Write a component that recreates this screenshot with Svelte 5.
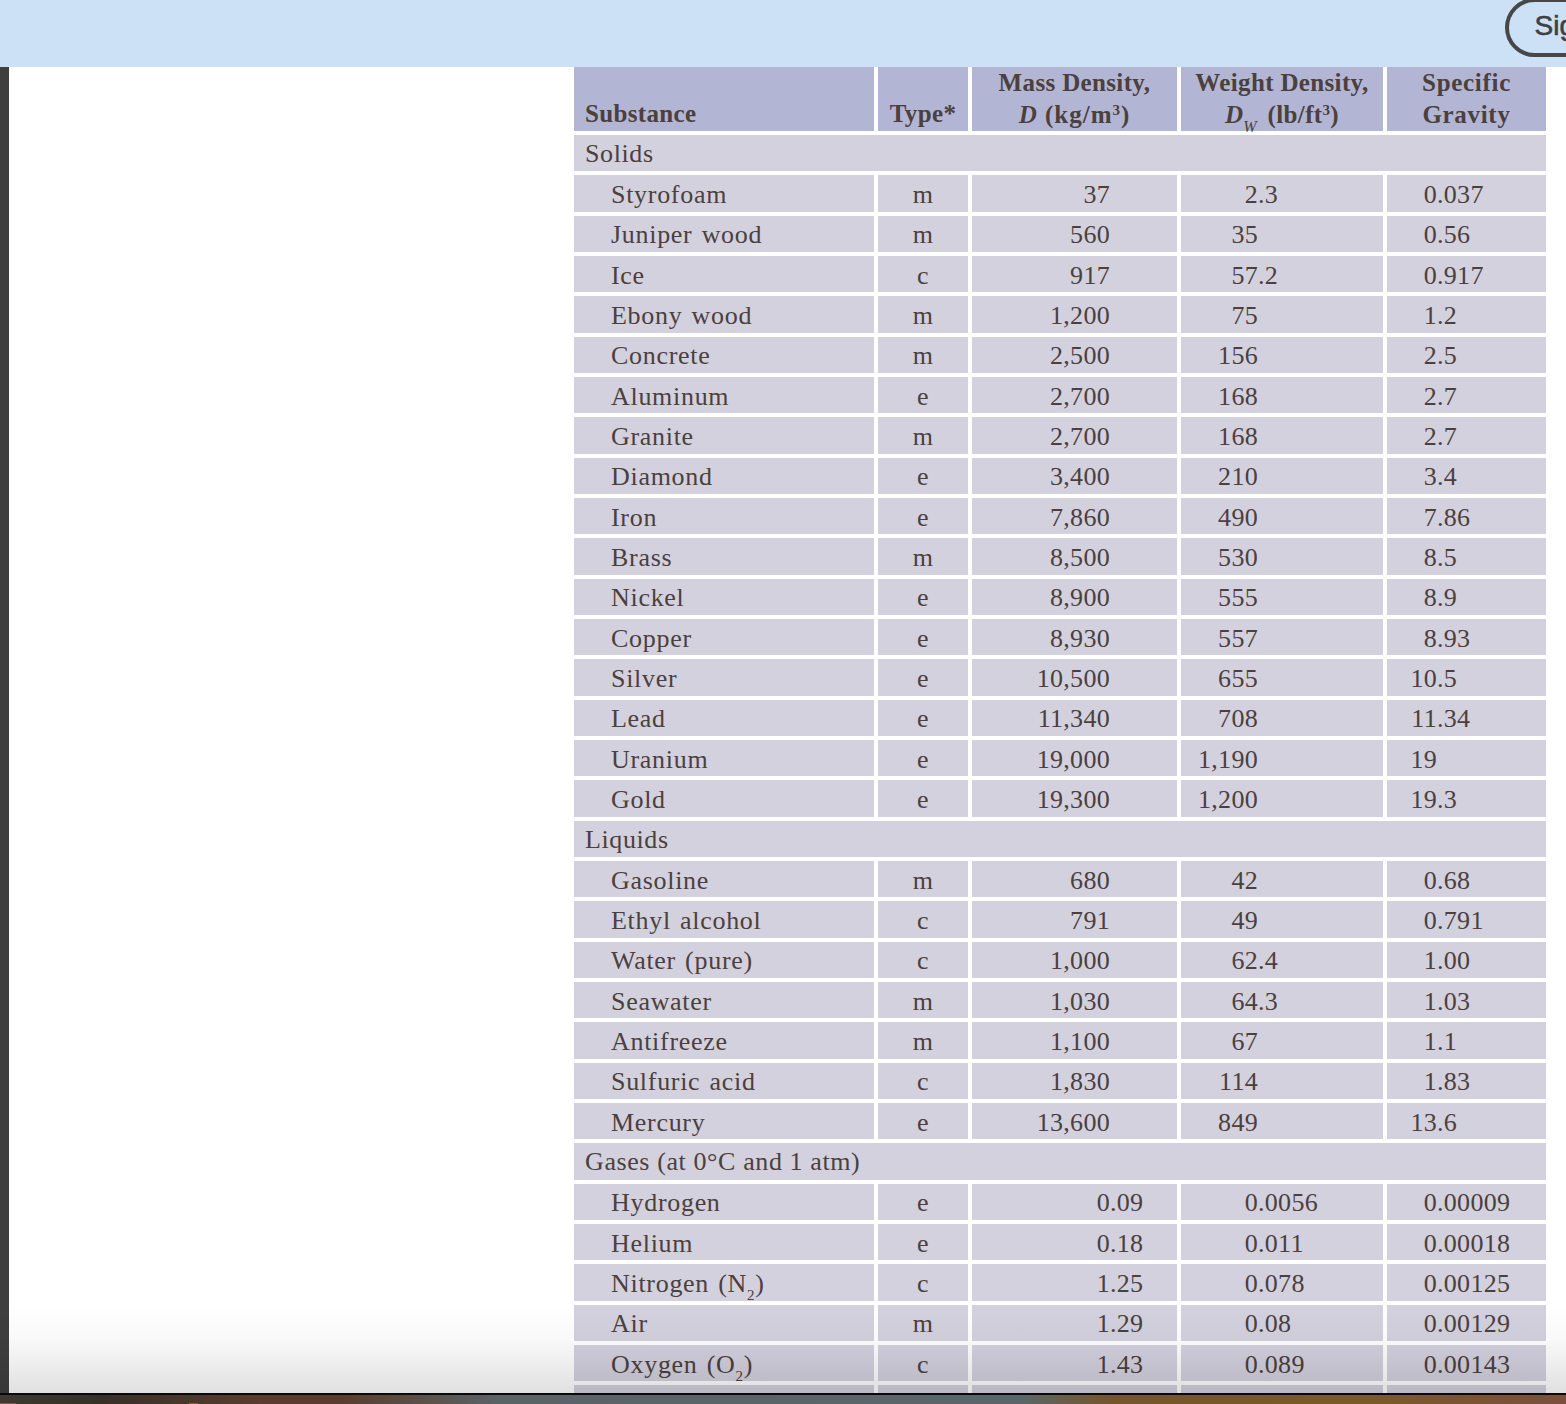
<script>
  const groups = [
    { title: 'Solids', rows: [
      ['Styrofoam','m','37','2.3','0.037'],['Juniper wood','m','560','35','0.56'],['Ice','c','917','57.2','0.917'],
      ['Ebony wood','m','1,200','75','1.2'],['Concrete','m','2,500','156','2.5'],['Aluminum','e','2,700','168','2.7'],
      ['Granite','m','2,700','168','2.7'],['Diamond','e','3,400','210','3.4'],['Iron','e','7,860','490','7.86'],
      ['Brass','m','8,500','530','8.5'],['Nickel','e','8,900','555','8.9'],['Copper','e','8,930','557','8.93'],
      ['Silver','e','10,500','655','10.5'],['Lead','e','11,340','708','11.34'],['Uranium','e','19,000','1,190','19'],
      ['Gold','e','19,300','1,200','19.3'] ] },
    { title: 'Liquids', rows: [
      ['Gasoline','m','680','42','0.68'],['Ethyl alcohol','c','791','49','0.791'],['Water (pure)','c','1,000','62.4','1.00'],
      ['Seawater','m','1,030','64.3','1.03'],['Antifreeze','m','1,100','67','1.1'],['Sulfuric acid','c','1,830','114','1.83'],
      ['Mercury','e','13,600','849','13.6'] ] },
    { title: 'Gases (at 0°C and 1 atm)', rows: [
      ['Hydrogen','e','0.09','0.0056','0.00009'],['Helium','e','0.18','0.011','0.00018'],['Nitrogen (N|2|)','c','1.25','0.078','0.00125'],
      ['Air','m','1.29','0.08','0.00129'],['Oxygen (O|2|)','c','1.43','0.089','0.00143'] ] }
  ];
  const split = (v) => { const i = v.indexOf('.'); return i < 0 ? [v, ''] : [v.slice(0, i), v.slice(i)]; };
  const cols = ['mass', 'weight', 'spec'];
</script>

<div class="page">
  <header class="top">
    <button class="sign">Sign in</button>
  </header>
  <div class="body">
    <aside class="strip"></aside>
    <main class="content">
      <div class="table">
        <div class="th left"><span>Substance</span></div>
        <div class="th single"><span>Type*</span></div>
        <div class="th"><span>Mass Density,<br /><span class="unit"><i>D</i> (kg/m<sup>3</sup>)</span></span></div>
        <div class="th"><span>Weight Density,<br /><i>D<sub>W</sub></i> (lb/ft<sup>3</sup>)</span></div>
        <div class="th wide"><span>Specific<br />Gravity</span></div>

        {#each groups as g}
          <div class="section"><span>{g.title}</span></div>
          {#each g.rows as r}
            {@const n = r[0].split('|')}
            <div class="td name"><span>{n[0]}{#if n[1]}<sub class="low">{n[1]}</sub>{n[2]}{/if}</span></div>
            <div class="td type">{r[1]}</div>
            {#each cols as c, i}
              {@const p = split(r[i + 2])}
              <div class="td num {c}"><span class="int">{p[0]}</span><span>{p[1]}</span></div>
            {/each}
          {/each}
        {/each}
        <div class="td"></div><div class="td"></div><div class="td"></div><div class="td"></div><div class="td"></div>
      </div>
    </main>
    <div class="fade"></div>
  </div>
  <footer class="bar"><span class="mark a"></span><span class="mark b"></span></footer>
</div>

<style>
  :global(body) { margin: 0; background: #fff; overflow: hidden; }
  .page {
    width: 1566px; height: 1404px; display: flex; flex-direction: column; overflow: hidden;
    font-family: "Liberation Serif", "Times New Roman", serif; color: #4b403d;
  }
  .top {
    flex: 0 0 67px; background: #cce1f6; display: flex; align-items: flex-start;
    padding-left: 1505px; box-sizing: border-box; overflow: hidden;
  }
  .sign {
    flex: none; width: 180px; height: 59px; margin: -2px 0 0; box-sizing: border-box;
    border: 4.5px solid #474747; border-radius: 29.5px;
    background: transparent; color: #3f3f3f; font: 28px "Liberation Sans", Arial, sans-serif; -webkit-text-stroke: 0.6px #3f3f3f;
    text-align: left; padding: 0 0 3px 25.5px;
  }
  .body { flex: 1; min-height: 0; display: flex; position: relative; overflow: hidden; }
  .strip { flex: 0 0 9px; background: #3f3f3f; }
  .content { flex: 1; padding-left: 565px; }
  .table {
    width: 972px; display: grid; grid-template-columns: 300px 90px 205px 202px 159px;
    grid-auto-rows: 36.34px; grid-template-rows: 64px; gap: 4px;
    font-size: 26px; letter-spacing: 0.3px;
  }
  .th {
    background: #b2b6d4; font-weight: 700; font-size: 25px; line-height: 31.5px; letter-spacing: 0.35px;
    display: flex; align-items: flex-end; justify-content: center; text-align: center; padding-bottom: 1px;
    box-sizing: border-box;
  }
  .th.left { justify-content: flex-start; padding: 0 0 2px 11px; }
  .th.single { padding-bottom: 2px; }
  .th.wide { letter-spacing: 0.7px; }
  .unit { letter-spacing: 1px; }
  .th sup { font-size: 15px; line-height: 0; vertical-align: 8px; }
  .th sub { font-size: 16px; line-height: 0; vertical-align: -9px; margin-right: 4px; font-weight: 400; }
  .section, .td {
    background: #d3d1de; display: flex; align-items: center; line-height: 36px; white-space: pre;
    box-sizing: border-box; padding-top: 3px;
  }
  .section { grid-column: 1 / -1; padding-left: 11px; padding-top: 2px; letter-spacing: 0.6px; }
  .name { padding-left: 37px; letter-spacing: 0.7px; word-spacing: 2px; }
  .low { font-size: 15px; line-height: 0; vertical-align: -8px; }
  .type { justify-content: center; }
  .int { display: inline-block; text-align: right; }
  .mass .int { width: 138px; }
  .weight .int { width: 77px; }
  .spec .int { width: 50px; }
  .fade {
    position: absolute; left: 0; right: 0; bottom: 0; height: 90px; pointer-events: none;
    background: linear-gradient(to bottom, rgba(0,0,0,0), rgba(0,0,0,.025) 40%, rgba(0,0,0,.12));
  }
  .bar {
    flex: 0 0 11px; box-sizing: border-box; border-top: 2px solid #0a0a0a; position: relative;
    background: linear-gradient(to right, #3d3a33 0, #36302a 100px, #5a3d2c 260px, #5a3d2c 340px, #5b6367 500px, #5b666b 1020px, #75562b 1110px, #7a5a28 1360px, #7c4f3e 1566px);
  }
  .mark { position: absolute; bottom: 0; height: 1px; background: #b5452f; }
  .mark.a { left: 0; width: 16px; }
  .mark.b { left: 189px; width: 9px; }
</style>
